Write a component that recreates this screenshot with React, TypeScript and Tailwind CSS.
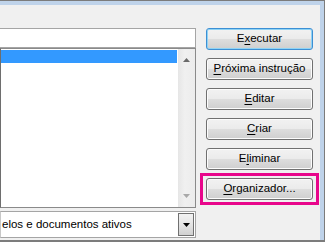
import type { ReactNode } from "react";

const font = { fontFamily: '"Liberation Sans", Arial, sans-serif' };

function Key({ children }: { children: ReactNode }) {
  return <span className="underline underline-offset-[2px] decoration-[1px]">{children}</span>;
}

function DialogButton({ children, isDefault }: { children: ReactNode; isDefault?: boolean }) {
  return (
    <button
      className={
        isDefault
          ? "flex h-[22px] w-[107px] items-center justify-center rounded-[3px] border border-[#3c8fd4] bg-[linear-gradient(#f2f2f2_0%,#ebebeb_48%,#dddddd_52%,#cfcfcf_100%)] text-[11.5px] text-black shadow-[inset_0_0_0_1px_#8fd3f5]"
          : "flex h-[22px] w-[107px] items-center justify-center rounded-[3px] border border-[#707070] bg-[linear-gradient(#f2f2f2_0%,#ebebeb_48%,#dddddd_52%,#cfcfcf_100%)] text-[11.5px] text-black shadow-[inset_0_0_0_1px_#fcfcfc]"
      }
    >
      <span>{children}</span>
    </button>
  );
}

function Triangle({ down, className }: { down?: boolean; className: string }) {
  return (
    <svg width="7" height="4" viewBox="0 0 7 4" className={className}>
      <path d={down ? "M0 0H7L3.5 4Z" : "M0 4H7L3.5 0Z"} fill="currentColor" />
    </svg>
  );
}

export default function App() {
  return (
    <div
      style={font}
      className="h-[242px] w-[325px] overflow-hidden border-t border-r border-b-2 border-[#7c7c7c] bg-[#bfd3ea] pt-[4px] pr-[4px]"
    >
      <div className="flex h-full bg-[#f0f0f0] pt-[23px]">
        {/* left: name field, macro list, scope combobox */}
        <div className="flex w-[196px] flex-col">
          <div className="h-[20px] border border-l-0 border-[#a5a5a5] bg-white" />
          <div className="flex h-[160px] border border-[#8a8a8a] border-l-[#6e6e6e] bg-white">
            <div className="flex-1 pt-[1px] pr-[1px]">
              <div className="h-[13px] bg-[#3399ff]" />
            </div>
            <div className="flex w-[17px] flex-col items-center justify-between bg-[linear-gradient(90deg,#e6e6e6,#f0f0f0_40%,#ececec)] py-[9px]">
              <Triangle className="text-[#6a6a6a]" />
              <Triangle down className="text-[#a8a8a8]" />
            </div>
          </div>
          <div className="mt-[3px] flex h-[27px] items-center justify-between border border-[#a5a5a5] border-l-[#c8c8c8] bg-white pr-[1px] text-[11.5px] text-black">
            <span className="pl-[1px]">elos e documentos ativos</span>
            <div className="flex h-[23px] w-[16px] items-center justify-center border border-[#707070] bg-[linear-gradient(#f2f2f2,#e4e4e4_50%,#d0d0d0)]">
              <Triangle down className="text-black" />
            </div>
          </div>
        </div>

        {/* right: action buttons */}
        <div className="ml-[10px] flex flex-col gap-[8px]">
          <DialogButton isDefault>
            E<Key>x</Key>ecutar
          </DialogButton>
          <DialogButton>
            <Key>P</Key>róxima instrução
          </DialogButton>
          <DialogButton>
            <Key>E</Key>ditar
          </DialogButton>
          <DialogButton>
            <Key>C</Key>riar
          </DialogButton>
          <DialogButton>
            E<Key>l</Key>iminar
          </DialogButton>
          <div className="relative">
            <DialogButton>
              <Key>O</Key>rganizador...
            </DialogButton>
            <div className="pointer-events-none absolute -top-[5px] -right-[6px] -bottom-[5px] -left-[6px] border-[3px] border-[#e8068b]" />
          </div>
        </div>
      </div>
    </div>
  );
}
